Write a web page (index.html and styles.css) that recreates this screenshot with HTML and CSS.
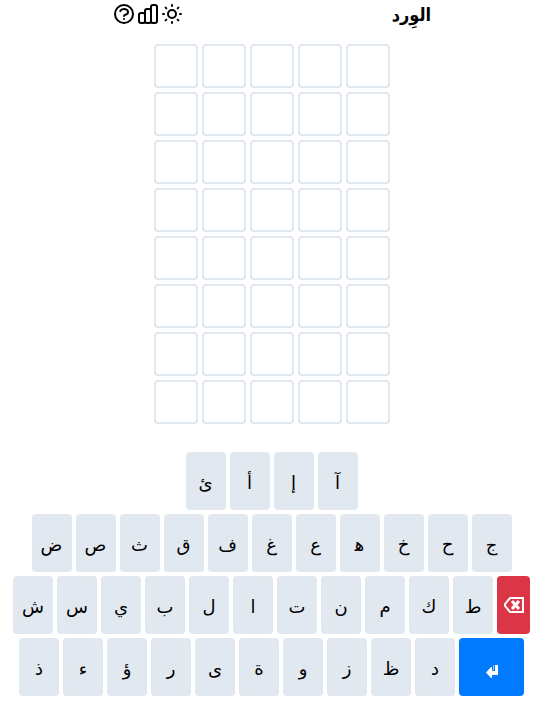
FILE: index.html
```
<!DOCTYPE html>
<html lang="ar" dir="rtl">
<head>
<meta charset="utf-8">
<title>الوِرد</title>
<link rel="stylesheet" href="styles.css">
</head>
<body>
<header class="topbar">
  <h1 class="title">الوِرد</h1>
  <nav class="actions">
    <button class="icon-button" aria-label="المظهر"><svg class="icon" viewBox="0 0 24 24"><path d="M12 3v1m0 16v1m9-9h-1M4 12H3m15.364 6.364l-.707-.707M6.343 6.343l-.707-.707m12.728 0l-.707.707M6.343 17.657l-.707.707M16 12a4 4 0 11-8 0 4 4 0 018 0z"/></svg></button>
    <button class="icon-button" aria-label="الإحصاءات"><svg class="icon" viewBox="0 0 24 24"><path d="M9 19v-6a2 2 0 00-2-2H5a2 2 0 00-2 2v6a2 2 0 002 2h2a2 2 0 002-2zm0 0V9a2 2 0 012-2h2a2 2 0 012 2v10m-6 0a2 2 0 002 2h2a2 2 0 002-2m0 0V5a2 2 0 012-2h2a2 2 0 012 2v14a2 2 0 01-2 2h-2a2 2 0 01-2-2z"/></svg></button>
    <button class="icon-button" aria-label="المساعدة"><svg class="icon" viewBox="0 0 24 24"><path d="M8.228 9c.549-1.165 2.03-2 3.772-2 2.21 0 4 1.343 4 3 0 1.4-1.278 2.575-3.006 2.907-.542.104-.994.54-.994 1.093m0 3h.01M21 12a9 9 0 11-18 0 9 9 0 0118 0z"/></svg></button>
  </nav>
</header>
<main>
  <div class="board" id="board"></div>
  <div class="keyboard" id="keyboard"></div>
</main>
<template id="delete-icon"><svg class="delete-icon" viewBox="0 0 20 16"><path d="M6 1h13v14H6L1 9V7z"/><path class="delete-cross" d="M8 4l7 8M15 4l-7 8"/></svg></template>
<template id="enter-icon"><svg class="enter-icon" viewBox="0 0 12 14"><path d="M9 1h3v10H6v3H5L0 8.500 5 3h1v4h3z"/><path class="enter-tail" d="M7.500 1v4.500H6.500"/></svg></template>
<script src="script.js"></script>
</body>
</html>
```
FILE: styles.css
```
* { box-sizing: border-box; }
body {
  margin: 0;
  background: #fff;
  color: #000;
  font-family: "Noto Sans", "DejaVu Sans", sans-serif;
}
button { border: 0; padding: 0; margin: 0; background: none; color: inherit; font: inherit; cursor: pointer; }
.topbar { display: flex; justify-content: space-around; height: 28px; padding: 0 8px; }
.title { margin: 0; font-family: "DejaVu Sans Condensed", "DejaVu Sans", sans-serif; font-size: 18px; line-height: 30px; font-weight: 700; }
.actions { display: flex; }
.icon-button { width: 24px; height: 28px; }
.icon { display: block; width: 24px; height: 24px; margin: auto; fill: none; stroke: currentColor; stroke-width: 2; stroke-linecap: round; stroke-linejoin: round; }
.board { display: grid; grid-template-columns: repeat(5, 44px); gap: 4px; justify-content: center; padding: 16px 0 28px; }
.tile { height: 44px; border: 2px solid #e2e8f0; border-radius: 4px; }
.keyboard { display: grid; gap: 4px; }
.row { display: flex; justify-content: center; gap: 4px; }
.key { width: 40px; height: 58px; padding-top: 2px; border-radius: 4px; background: #e2e8f0; font-size: 18px; line-height: 28px; }
.key-delete { width: 33px; padding-top: 0; background: #dc3545; color: #fff; }
.key-enter { width: 65px; padding-top: 8px; background: #007bff; color: #fff; }
.delete-icon { display: block; width: 20px; height: 16px; margin: auto; fill: none; stroke: currentColor; stroke-width: 2; }
.delete-cross { stroke-width: 3; }
.enter-icon { display: block; width: 12px; height: 14px; margin: auto; fill: currentColor; }
.enter-tail { fill: none; stroke: currentColor; stroke-width: 1; opacity: 0.6; }
```
FILE: script.js
```
const board = document.getElementById("board");
for (let i = 0; i < 40; i++) {
  const tile = document.createElement("div");
  tile.className = "tile";
  board.append(tile);
}

// The joiner after heh selects its initial form.
const rows = ["آ إ أ ئ", "ج ح خ ه\u200d ع غ ف ق ث ص ض", "DEL ط ك م ن ت ا ل ب ي س ش", "ENTER د ظ ز و ة ى ر ؤ ء ذ"];
const special = {
  DEL: { name: "delete", label: "حذف" },
  ENTER: { name: "enter", label: "إدخال" },
};
for (const letters of rows) {
  const row = document.createElement("div");
  row.className = "row";
  for (const letter of letters.split(" ")) {
    const key = document.createElement("button");
    key.className = "key";
    const action = special[letter];
    if (action) {
      key.classList.add("key-" + action.name);
      key.setAttribute("aria-label", action.label);
      key.append(document.getElementById(action.name + "-icon").content.cloneNode(true));
    } else {
      key.textContent = letter;
    }
    row.append(key);
  }
  document.getElementById("keyboard").append(row);
}
```
